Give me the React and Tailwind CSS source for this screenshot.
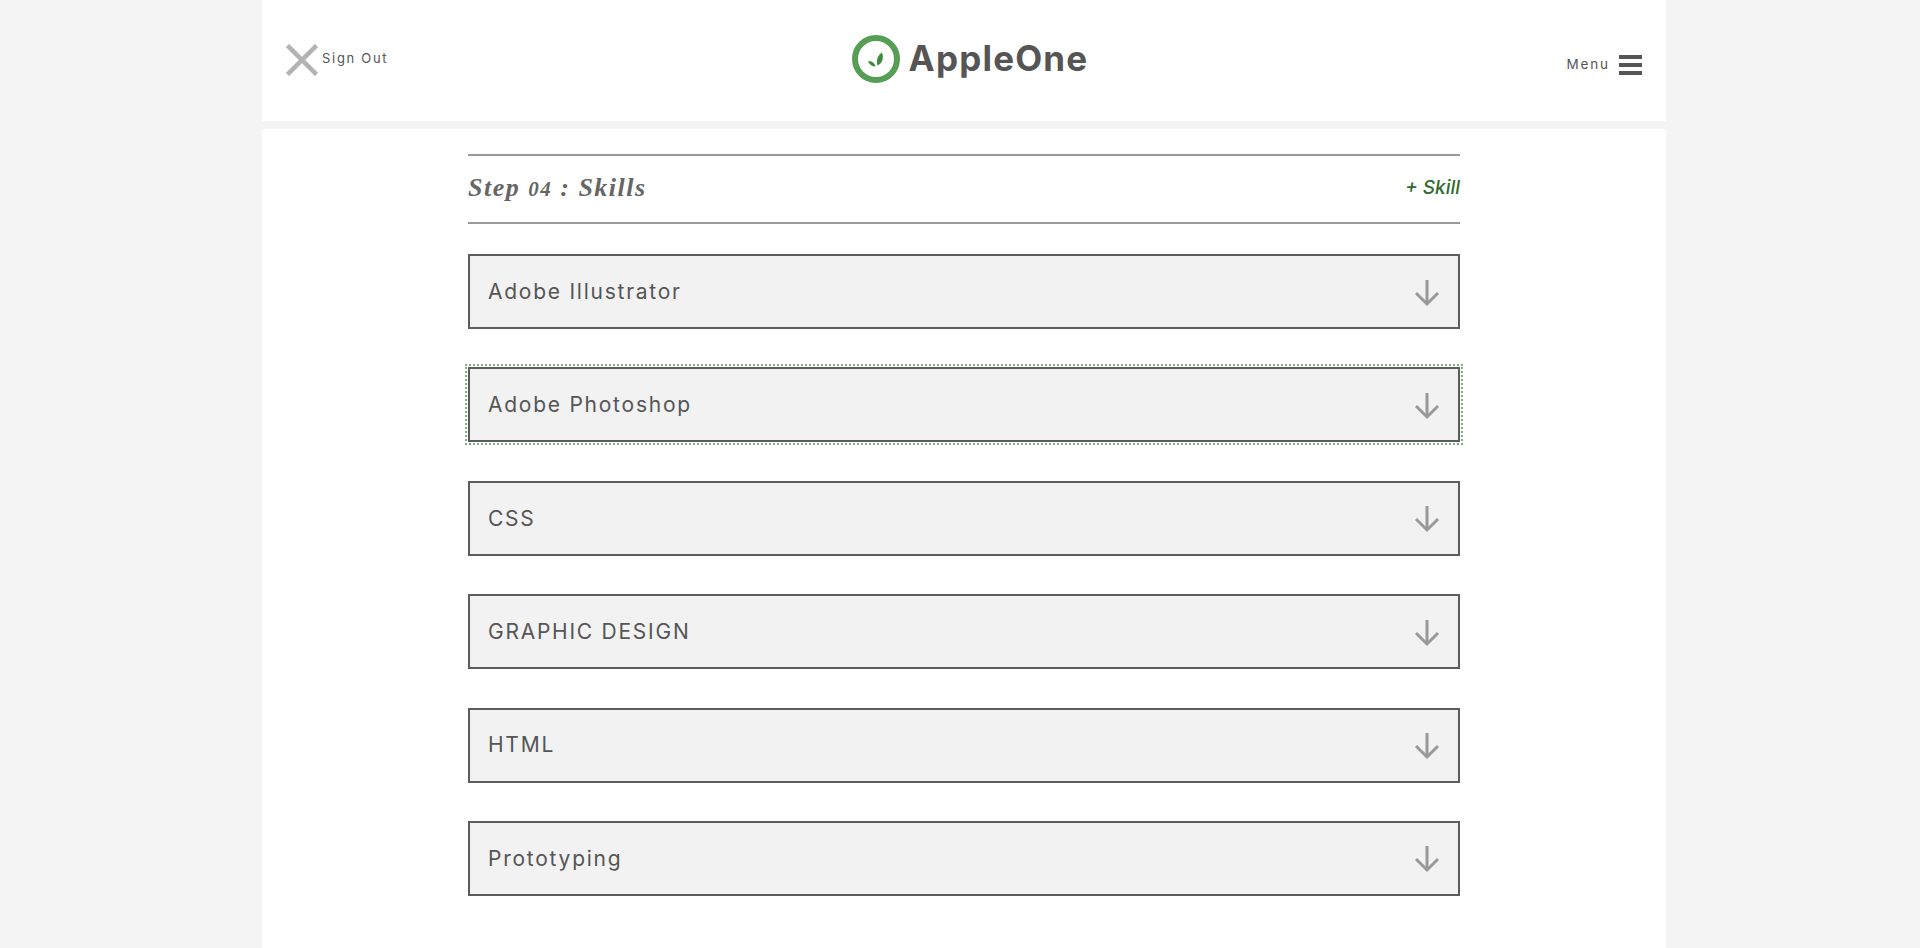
const skills = [
  "Adobe Illustrator",
  "Adobe Photoshop",
  "CSS",
  "GRAPHIC DESIGN",
  "HTML",
  "Prototyping",
];

function Logo() {
  return (
    <svg width="48" height="48" viewBox="0 0 48 48" className="shrink-0">
      <circle cx="24" cy="24" r="21" fill="none" stroke="#579e55" strokeWidth="6" />
      <path d="M25.5 30.5 C24 25.5 25.5 20.5 30 17.5 C32 23 30.5 28 25.5 30.5 Z" fill="#3d8a3f" />
      <path d="M23.5 31.5 C20 31.5 17.5 29.5 16 26.5 C19.5 25.5 22.5 27.5 23.5 31.5 Z" fill="#3d8a3f" />
    </svg>
  );
}

function ArrowDown() {
  return (
    <svg width="26" height="28" viewBox="0 0 26 28" fill="none" stroke="#999999" strokeWidth="3" className="shrink-0">
      <path d="M13 1 V25" />
      <path d="M2 14 L13 25 L24 14" />
    </svg>
  );
}

function SkillRow({ name, focused }) {
  return (
    <div
      className={`flex h-[75px] items-center justify-between border-2 border-[#5c5c5c] bg-[#f2f2f2] pl-[18px] pr-[18px] pt-[2px] ${
        focused ? "outline-2 outline-offset-[1px] outline-dotted outline-[#7ab07a]" : ""
      }`}
    >
      <span className="-mt-[2px] font-['Inter',sans-serif] text-[21px] tracking-[1.75px] text-[#555555]">{name}</span>
      <ArrowDown />
    </div>
  );
}

export default function App() {
  return (
    <div className="h-[948px] overflow-hidden bg-[#f4f4f4]">
      <div className="ml-[262px] w-[1404px]">
        {/* Header */}
        <div className="grid h-[121px] grid-cols-3 bg-white px-6">
          <div className="flex items-start pt-[44px]">
            <svg width="32" height="32" viewBox="0 0 32 32" stroke="#b3b3b3" strokeWidth="4.5" className="shrink-0">
              <path d="M1.5 1.5 L30.5 30.5 M30.5 1.5 L1.5 30.5" />
            </svg>
            <span className="ml-[4px] mt-[5px] font-['Inter',sans-serif] text-[13px] tracking-[1.7px] text-[#555555]">Sign Out</span>
          </div>
          <div className="flex items-start justify-center gap-[9px] pl-[12px] pt-[35px]">
            <Logo />
            <span className="font-['Inter',sans-serif] text-[35px] font-bold leading-[46px] tracking-[1.2px] text-[#555555]">AppleOne</span>
          </div>
          <div className="flex items-start justify-end pt-[55px]">
            <span className="mr-[9px] font-['Inter',sans-serif] text-[13.5px] leading-[18px] tracking-[1.9px] text-[#555555]">Menu</span>
            <div className="flex w-[23px] flex-col gap-1">
              <div className="h-1 bg-[#555555]" />
              <div className="h-1 bg-[#555555]" />
              <div className="h-1 bg-[#555555]" />
            </div>
          </div>
        </div>

        {/* Body */}
        <div className="mt-2 h-[819px] bg-white px-[206px] pt-[25px]">
          <div className="flex h-[70px] items-center justify-between border-y-2 border-[#999999] pb-[2px]">
            <h2 className="-mt-[2px] font-['Liberation_Serif',serif] text-[26px] font-bold italic tracking-[1.5px] text-[#666666]">
              Step <span className="text-[21px]">04</span> : Skills
            </h2>
            <span className="font-['Inter',sans-serif] text-[19px] font-medium italic text-[#2e6b2e]">+ Skill</span>
          </div>
          <div className="mt-[30px] flex flex-col gap-[38.4px]">
            {skills.map((name, i) => (
              <SkillRow key={name} name={name} focused={i === 1} />
            ))}
          </div>
        </div>
      </div>
    </div>
  );
}
